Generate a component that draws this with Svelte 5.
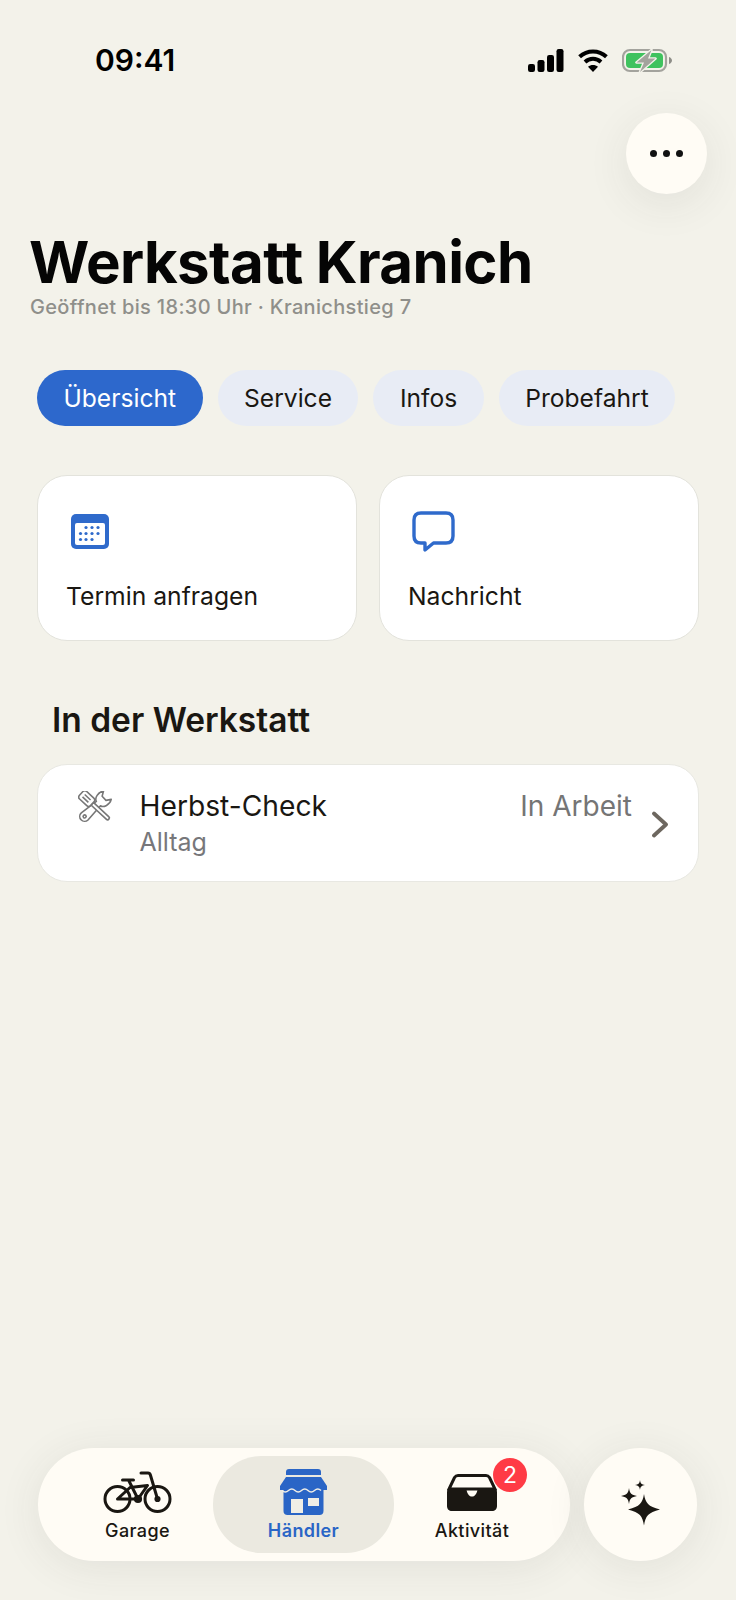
<script>
  const tabs = ["Übersicht", "Service", "Infos", "Probefahrt"];
</script>

<div class="page">
  <div class="status">
    <span class="time">09:41</span>
    <div class="status-icons">
      <svg width="36" height="23" viewBox="0 0 36 23">
        <rect x="0" y="15" width="7" height="8" rx="2.200" fill="#000"/>
        <rect x="9.500" y="11" width="7" height="12" rx="2.200" fill="#000"/>
        <rect x="19" y="6" width="7" height="17" rx="2.200" fill="#000"/>
        <rect x="28.500" y="0" width="7" height="23" rx="2.200" fill="#000"/>
      </svg>
      <svg width="30" height="23" viewBox="0 0 30 23" fill="none" stroke="#000" stroke-width="4">
        <path d="M1.600 7.800C9.300 0.600 20.700 0.600 28.400 7.800"/>
        <path d="M7 13C11.700 8.800 18.300 8.800 23 13"/>
        <path d="M15 23l-5-5.200c2.800-2.400 7.200-2.400 10 0z" fill="#000" stroke="none"/>
      </svg>
      <svg width="50" height="25" viewBox="0 0 50 25">
        <rect x="1" y="2" width="43" height="21" rx="7" fill="none" stroke="#a3a39d" stroke-width="2.200"/>
        <rect x="4" y="5" width="37" height="15" rx="4" fill="#3fc25e"/>
        <path d="M47 9c1.800.6 3 2 3 3.500s-1.200 2.900-3 3.500z" fill="#8e8e88"/>
        <path d="M29.500 2 14.500 14.500H22L18 24 33.500 10.500H26z" fill="#a3a39d" stroke="#f3f2ea" stroke-width="2.600" stroke-linejoin="round" paint-order="stroke"/>
      </svg>
    </div>
  </div>

  <div class="top-row">
    <button class="more" aria-label="Mehr">
      <i></i><i></i><i></i>
    </button>
  </div>

  <h1>Werkstatt Kranich</h1>
  <p class="sub">Geöffnet bis 18:30 Uhr · Kranichstieg 7</p>

  <div class="tabs">
    {#each tabs as t, i}
      <span class="tab" class:on={i === 0}>{t}</span>
    {/each}
  </div>

  <div class="cards">
    <div class="card">
      <svg class="cal" width="38" height="35" viewBox="0 0 38 35">
        <rect width="38" height="35" rx="5" fill="#2f6acb"/>
        <rect x="4" y="9" width="30" height="22" rx="2" fill="#fff"/>
        <g fill="#2f6acb">
          {#each [[15,13.500],[21,13.500],[27,13.500],[9.500,19.500],[15,19.500],[21,19.500],[27,19.500],[9.500,25.500],[15,25.500],[21,25.500]] as d}
            <circle cx={d[0]} cy={d[1]} r="1.600"/>
          {/each}
        </g>
      </svg>
      <span>Termin anfragen</span>
    </div>
    <div class="card">
      <svg class="chat" width="43" height="41" viewBox="0 0 43 41" fill="none">
        <path d="M9 2h25c4.400 0 7 2.600 7 7v16c0 4.400-2.600 7-7 7H21.500L13 39v-7H9c-4.400 0-7-2.600-7-7V9c0-4.400 2.600-7 7-7z" stroke="#2f6acb" stroke-width="3.400" stroke-linejoin="round"/>
      </svg>
      <span>Nachricht</span>
    </div>
  </div>

  <h2>In der Werkstatt</h2>

  <div class="row">
    <svg class="tools" width="34" height="32" viewBox="0 0 36 34" fill="#fff" stroke="#777" stroke-width="1.700" stroke-linejoin="round">
      <g transform="translate(7 27) rotate(-43)">
        <path d="M0-5.200a5.200 5.200 0 0 0 0 10.400L20 3.200c.8 3.800 8 6.200 13 2.800l-4.800-3V-3L33-6c-5-3.400-12.200-1-13 2.800z"/>
        <circle cx="0" cy="0" r="1.600"/>
      </g>
      <g transform="translate(7 6) rotate(43)">
        <rect x="11" y="-1.900" width="24" height="3.800" rx="1.500"/>
        <rect x="-5" y="-5.500" width="16" height="11" rx="2.800"/>
        <path d="M-1.500-1.700H7M-1.500 1.700H7" fill="none"/>
      </g>
    </svg>
    <div class="row-text">
      <span class="row-title">Herbst-Check</span>
      <span class="row-sub">Alltag</span>
    </div>
    <span class="row-state">In Arbeit</span>
    <svg class="chev" width="18" height="27" viewBox="0 0 18 27" fill="none" stroke="#6d675f" stroke-width="3.800" stroke-linecap="round" stroke-linejoin="round">
      <path d="M3 2.500 15 13.500 3 24.500"/>
    </svg>
  </div>

  <div class="bottom">
    <nav class="bar">
      <div class="item">
        <span class="ico">
          <svg width="69" height="42" viewBox="0 0 69 42" fill="none" stroke="#1a1712" stroke-width="3" stroke-linecap="round" stroke-linejoin="round">
            <circle cx="14.500" cy="28" r="12.500"/>
            <circle cx="54.500" cy="28" r="12.500"/>
            <path d="M14.500 28H35L44.500 14.500 27 16.500 14.500 28"/>
            <path d="M19.500 9H30.500M25.500 9 35 28"/>
            <path d="M38 2H45c1.500 0 2 .6 2.400 2L54.500 28"/>
            <circle cx="35" cy="28" r="2.600" fill="#1a1712"/>
            <circle cx="54.500" cy="28" r="1.600" fill="#1a1712"/>
          </svg>
        </span>
        <span>Garage</span>
      </div>
      <div class="item active">
        <span class="ico">
          <svg width="47" height="46" viewBox="0 0 47 46">
            <path d="M6 3C6 1 7 0 9 0h29c2 0 3 1 3 3v3H6z" fill="#2a65c6"/>
            <path d="M6 8h35l6 9v4H0v-4z" fill="#2a65c6"/>
            <path d="M3.500 21h40v21c0 2.500-1.500 4-4 4h-32c-2.500 0-4-1.500-4-4z" fill="#2a65c6"/>
            <path d="M2 21.500q3.200 3 6.500 0t6.500 0 6.500 0 6.500 0 6.500 0 6.500 0" fill="none" stroke="#f0eee6" stroke-width="1.500"/>
            <rect x="11" y="30" width="12" height="14" fill="#f0eee6"/>
            <rect x="28" y="29" width="11" height="8" fill="#f0eee6"/>
          </svg>
        </span>
        <span>Händler</span>
      </div>
      <div class="item">
        <span class="ico tray-wrap">
          <svg width="50" height="37" viewBox="0 0 50 37">
            <path d="M11 1.500h28c1.500 0 2.500.5 3.500 2L48 15H2L7.500 3.500c1-1.500 2-2 3.500-2z" fill="none" stroke="#1a1712" stroke-width="3"/>
            <path d="M0 18c0-2 1.500-4 4-4h14c.8 0 1.200.5 1.400 1.200.6 3.800 2.400 7.300 5.600 7.300s5-3.500 5.600-7.300c.2-.7.6-1.200 1.400-1.200h14c2.500 0 4 2 4 4v14c0 3-2 5-5 5H5c-3 0-5-2-5-5z" fill="#1a1712"/>
          </svg>
          <span class="badge">2</span>
        </span>
        <span>Aktivität</span>
      </div>
    </nav>
    <button class="spark" aria-label="Assistent">
      <svg width="40" height="46" viewBox="0 0 40 46" fill="#1a1712">
        <path d="M24 14c1.500 9 4 12.500 16 15.500-12 3-14.500 6.500-16 16-1.500-9.500-4-13-16-16 12-3 14.500-6.500 16-15.500z"/>
        <path d="M9 8c.8 5.500 2.500 7 8 8-5.500 1-7.200 2.500-8 8-.8-5.500-2.500-7-8-8 5.500-1 7.200-2.500 8-8z"/>
        <path d="M20 0c.5 3.500 1.500 4.500 5 5-3.500.5-4.500 1.500-5 5-.5-3.500-1.500-4.500-5-5 3.500-.5 4.500-1.500 5-5z"/>
      </svg>
    </button>
  </div>
</div>

<style>
  :global(body) {
    margin: 0;
    background: #f3f2ea;
  }
  .page {
    height: 1600px;
    box-sizing: border-box;
    display: flex;
    flex-direction: column;
    font-family: Inter, "Liberation Sans", sans-serif;
    color: #1a1712;
    background: #f3f2ea;
    overflow: hidden;
  }
  .status {
    display: flex;
    justify-content: space-between;
    align-items: center;
    height: 24px;
    margin-top: 48px;
    padding: 0 64px 0 95px;
  }
  .time {
    font-size: 30px;
    font-weight: 600;
    color: #000;
  }
  .status-icons {
    display: flex;
    align-items: center;
    gap: 14px;
  }
  .status-icons svg {
    display: block;
  }
  .top-row {
    display: flex;
    justify-content: flex-end;
    padding: 41px 29px 0 0;
  }
  .more {
    width: 81px;
    height: 81px;
    border: 0;
    border-radius: 50%;
    background: #fffcf5;
    box-shadow: 0 10px 44px rgba(60, 60, 50, 0.09);
    display: flex;
    align-items: center;
    justify-content: center;
    gap: 6px;
    padding: 0;
  }
  .more i {
    width: 7px;
    height: 7px;
    border-radius: 50%;
    background: #111;
  }
  h1 {
    margin: 34px 0 0 29px;
    font-size: 58.200px;
    line-height: 68px;
    font-weight: 700;
    letter-spacing: -0.6px;
    color: #050505;
  }
  .sub {
    margin: -1px 0 0 30px;
    font-size: 20px;
    line-height: 24px;
    font-weight: 500;
    letter-spacing: 0.33px;
    color: #8f8f8a;
  }
  .tabs {
    display: flex;
    gap: 15px;
    margin: 51px 0 0 37px;
  }
  .tab {
    height: 56px;
    line-height: 56px;
    padding: 0 26.500px;
    border-radius: 28px;
    font-size: 24.600px;
    background: #e8ecf5;
  }
  .tab.on {
    background: #2d68cc;
    color: #fff;
  }
  .cards {
    display: flex;
    gap: 22px;
    margin: 49px 37px 0 37px;
  }
  .card {
    flex: 1;
    height: 166px;
    box-sizing: border-box;
    background: #fff;
    border: 1px solid #e3e3dc;
    border-radius: 30px;
    padding: 35px 28px 0;
    display: flex;
    flex-direction: column;
    font-size: 24.700px;
    line-height: 30px;
  }
  .card svg {
    display: block;
    height: 41px;
    margin-bottom: 29px;
  }
  .cal {
    margin-left: 5px;
  }
  .chat {
    margin-left: 4px;
  }
  h2 {
    margin: 59px 0 0 52px;
    font-size: 33.500px;
    line-height: 40px;
    font-weight: 600;
  }
  .row {
    display: flex;
    align-items: flex-start;
    margin: 24px 37px 0;
    height: 118px;
    box-sizing: border-box;
    background: #fff;
    border: 1px solid #e8e8e2;
    border-radius: 30px;
    padding: 0 29px 0 40px;
  }
  .tools {
    margin-top: 26px;
    flex: none;
  }
  .row-text {
    display: flex;
    flex-direction: column;
    margin-left: 27.500px;
    flex: 1;
    padding-top: 24px;
  }
  .row-title {
    font-size: 28.200px;
    line-height: 34px;
  }
  .row-sub {
    font-size: 25px;
    line-height: 38px;
    color: #77777a;
  }
  .row-state {
    font-size: 28px;
    line-height: 34px;
    padding-top: 24px;
    color: #757575;
  }
  .chev {
    margin: 46px 0 0 19px;
    flex: none;
  }
  .bottom {
    margin-top: auto;
    margin-bottom: 39px;
    padding: 0 39px 0 38px;
    display: flex;
    gap: 14px;
  }
  .bar {
    width: 532px;
    flex: none;
    height: 113px;
    border-radius: 57px;
    background: #fffcf5;
    box-shadow: 0 6px 44px rgba(60, 60, 50, 0.09);
    display: grid;
    grid-template-columns: 151px 181px 156px;
    align-items: center;
    box-sizing: border-box;
    padding: 0 20px 0 24px;
  }
  .item {
    height: 97px;
    border-radius: 48px;
    display: flex;
    flex-direction: column;
    align-items: center;
    padding-top: 13px;
    box-sizing: border-box;
    font-size: 18px;
    line-height: 22px;
    font-weight: 500;
    letter-spacing: 0.4px;
  }
  .ico {
    height: 46px;
    display: flex;
    align-items: center;
    margin-bottom: 5px;
  }
  .ico svg {
    display: block;
  }
  .item.active {
    background: #ebe9e0;
    color: #2a65c6;
    font-weight: 600;
  }
  .tray-wrap {
    position: relative;
  }
  .badge {
    position: absolute;
    top: -11px;
    left: 46px;
    width: 34px;
    height: 34px;
    border-radius: 50%;
    background: #ff3b45;
    color: #fff;
    font-size: 23px;
    line-height: 34px;
    font-weight: 400;
    text-align: center;
    letter-spacing: 0;
  }
  .spark {
    width: 113px;
    height: 113px;
    flex: none;
    border: 0;
    border-radius: 50%;
    background: #fffcf5;
    box-shadow: 0 6px 44px rgba(60, 60, 50, 0.09);
    display: flex;
    align-items: center;
    justify-content: center;
    padding: 0 2px 3px 0;
  }
</style>
